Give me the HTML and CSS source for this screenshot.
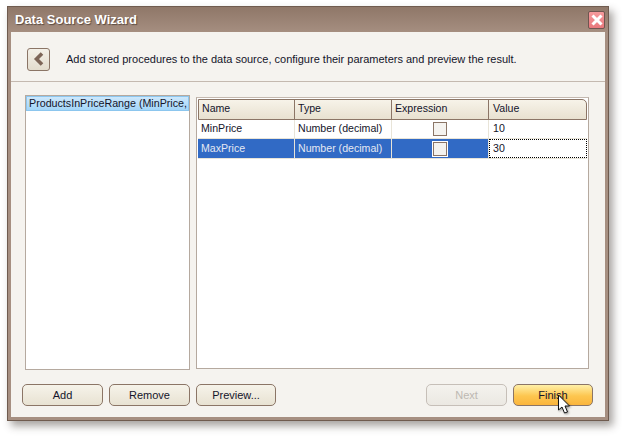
FILE: index.html
```html
<!DOCTYPE html>
<html lang="en">
<head>
<meta charset="utf-8">
<title>Data Source Wizard</title>
<link rel="stylesheet" href="styles.css">
</head>
<body>
<div class="window">
  <div class="titlebar">
    <span class="title">Data Source Wizard</span>
    <span class="close"><svg width="14" height="14" viewBox="0 0 14 14"><path d="M2.5 2.5 L11.5 11.5 M11.5 2.5 L2.5 11.5" stroke="#fff" stroke-width="3" fill="none"/></svg></span>
  </div>
  <div class="content">
    <div class="header">
      <span class="back"><svg width="12" height="14" viewBox="0 0 12 14"><path d="M9 1.5 L3.5 7 L9 12.5" stroke="#7d6557" stroke-width="3.6" fill="none"/></svg></span>
      <span class="lead">Add stored procedures to the data source, configure their parameters and preview the result.</span>
    </div>
    <div class="main">
      <div class="list"><div class="list-item">ProductsInPriceRange (MinPrice,</div></div>
      <div class="grid-box">
        <div class="grid">
          <div class="row head">
            <div class="cell c-name">Name</div>
            <div class="cell c-type">Type</div>
            <div class="cell c-expr">Expression</div>
            <div class="cell c-val">Value</div>
          </div>
          <div class="row">
            <div class="cell c-name">MinPrice</div>
            <div class="cell c-type">Number (decimal)</div>
            <div class="cell c-expr center"><span class="check"></span></div>
            <div class="cell c-val">10</div>
          </div>
          <div class="row selected">
            <div class="cell c-name">MaxPrice</div>
            <div class="cell c-type">Number (decimal)</div>
            <div class="cell c-expr center"><span class="check"></span></div>
            <div class="cell c-val focus">30</div>
          </div>
        </div>
      </div>
    </div>
    <div class="footer">
      <div class="btn-group">
        <span class="btn">Add</span>
        <span class="btn">Remove</span>
        <span class="btn narrow">Preview...</span>
      </div>
      <div class="btn-group">
        <span class="btn disabled">Next</span>
        <span class="btn primary narrow">Finish
          <svg class="cursor" width="14" height="21" viewBox="0 0 14 21"><path d="M1.5 1 L1.5 16 L5 13 L7.5 19 L10.5 18 L8 12 L12.5 12 Z" fill="#fff" stroke="#111" stroke-width="1"/></svg>
        </span>
      </div>
    </div>
  </div>
</div>
</body>
</html>
```
FILE: styles.css
```css
* { box-sizing: border-box; }
html, body { margin: 0; padding: 0; background: #fff; }
body {
  width: 622px;
  height: 436px;
  overflow: hidden;
  padding: 6px 0 0 7px;
  font-family: "Liberation Sans", Arial, sans-serif;
  font-size: 11px;
  color: #14142a;
}
.window {
  width: 602px;
  height: 415px;
  background: linear-gradient(#8f7768, #a68f81 26px);
  border: 1px solid #6f5b4f;
  box-shadow: 4px 5px 8px rgba(60, 50, 45, .45);
  display: flex;
  flex-direction: column;
  padding: 0 3px 3px;
}
.titlebar {
  height: 25px;
  display: flex;
  align-items: center;
  justify-content: space-between;
  flex: none;
}
.title {
  margin-left: 4px;
  color: #fff;
  font-weight: bold;
  font-size: 13px;
  text-shadow: 1px 1px 1px #5b4a40;
}
.close {
  width: 17px;
  height: 18px;
  background: linear-gradient(#f59a9c, #e8787c);
  border: 1px solid #6f5550;
  border-radius: 2px;
  display: flex;
  align-items: center;
  justify-content: center;
  margin-top: 1px;
}
.content {
  flex: 1;
  background: #f5f3ef;
  display: flex;
  flex-direction: column;
  min-height: 0;
}
.header {
  height: 50px;
  flex: none;
  border-bottom: 1px solid #c4b9b0;
  display: flex;
  align-items: center;
  padding: 5px 0 0 16px;
}
.back {
  width: 23px;
  height: 23px;
  border: 1px solid #8b7566;
  border-radius: 3px;
  background: linear-gradient(#f4f0e8, #e3dccd);
  display: flex;
  align-items: center;
  justify-content: center;
}
.lead { margin-left: 16px; }
.main {
  flex: none;
  height: 275px;
  margin-top: 13px;
  display: flex;
  padding-left: 14px;
}
.list {
  width: 165px;
  height: 275px;
  background: #fff;
  border: 1px solid #b5a99f;
}
.list-item {
  height: 15px;
  line-height: 13px;
  padding-left: 2px;
  font-size: 10.7px;
  white-space: nowrap;
  background: linear-gradient(#cde8fc, #a3d5f8);
  border: 1px solid #8cc6ee;
}
.grid-box {
  width: 393px;
  height: 272px;
  margin: 2px 0 0 6px;
  background: #fff;
  border: 1px solid #b5a99f;
  padding: 1px;
  border-top-color: #c4b9b0;
}
.row { display: flex; height: 19px; border-bottom: 1px solid #e8e4d8; }
.cell {
  line-height: 17px;
  padding-left: 3px;
  font-size: 10.6px;
  border-right: 1px solid #e8e4d8;
  white-space: nowrap;
}
.c-name, .c-type, .c-expr { width: 97px; }
.c-val { width: 98px; padding-left: 4px; border-right: 0; }
.center { display: flex; align-items: center; justify-content: center; padding: 0; }
.head {
  height: 21px;
  background: linear-gradient(#f7f3e9, #e8e1d0);
  border: 1px solid #8b7566;
  border-top-right-radius: 5px;
}
.head .cell { border-right: 1px solid #8b7566; }
.head .c-name { width: 96px; }
.head .c-val { border-right: 0; width: 96px; }
.selected { background: #316ac5; color: #e4e8f2; height: 20px; }
.selected .cell { line-height: 18px; }
.check {
  width: 14px;
  height: 14px;
  background: #f5f3ef;
  border: 1px solid #8b7566;
  display: block;
}
.selected .check { outline: 1px solid #fff; }
.selected .focus {
  background: #fff;
  color: #14142a;
  border: 1px dotted #000;
  line-height: 16px;
  padding-left: 3px;
}
.footer {
  flex: 1;
  display: flex;
  justify-content: space-between;
  align-items: flex-start;
  padding: 14px 12px 0 11px;
}
.btn-group { display: flex; gap: 6px; }
.btn {
  position: relative;
  width: 81px;
  height: 22px;
  border: 1px solid #8b7566;
  border-radius: 5px;
  background: linear-gradient(#f6f3ea, #e8e2d2);
  text-align: center;
  line-height: 20px;
}
.narrow { width: 80px; }
.disabled {
  color: #bdb8b2;
  border-color: #c6bfb8;
  background: linear-gradient(#f4f2ee, #ebe8e2);
}
.primary {
  background: linear-gradient(#fff0a8, #fdc64f 55%, #fbb53c);
}
.cursor {
  position: absolute;
  left: 43px;
  top: 9px;
  filter: drop-shadow(1px 1px 1px rgba(0, 0, 0, .4));
}
```
